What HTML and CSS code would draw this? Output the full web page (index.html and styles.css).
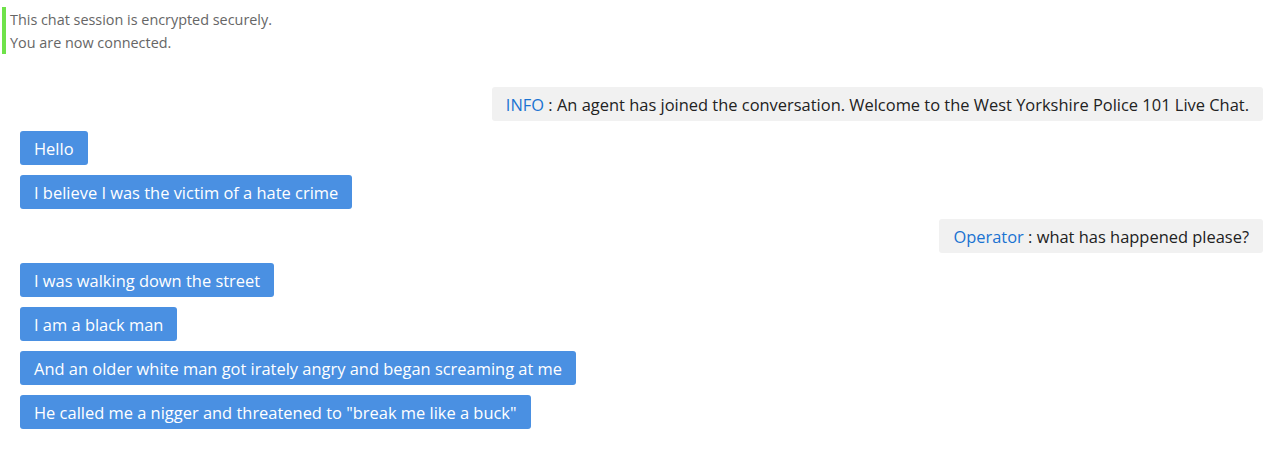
FILE: index.html
```html
<!DOCTYPE html>
<html lang="en">
<head>
<meta charset="utf-8">
<title>Live Chat</title>
<link rel="stylesheet" href="styles.css">
</head>
<body>
<div class="chat">
  <div class="status">
    <div>This chat session is encrypted securely.</div>
    <div>You are now connected.</div>
  </div>
  <div class="messages">
    <div class="msg agent"><span class="name">INFO</span> : An agent has joined the conversation. Welcome to the West Yorkshire Police 101 Live Chat.</div>
    <div class="msg user">Hello</div>
    <div class="msg user">I believe I was the victim of a hate crime</div>
    <div class="msg agent"><span class="name">Operator</span> : what has happened please?</div>
    <div class="msg user">I was walking down the street</div>
    <div class="msg user">I am a black man</div>
    <div class="msg user">And an older white man got irately angry and began screaming at me</div>
    <div class="msg user">He called me a nigger and threatened to "break me like a buck"</div>
  </div>
</div>
</body>
</html>
```

FILE: styles.css
```css
html, body {
  margin: 0;
  padding: 0;
  background: #fff;
}
body {
  font-family: "Open Sans", Lato, sans-serif;
}
.chat {
  padding: 7px 10px 0 2px;
}
.status {
  border-left: 4px solid #6fe24a;
  padding: 1px 0 0 4px;
  font-size: 14.4px;
  line-height: 23px;
  color: #666;
}
.messages {
  display: flex;
  flex-direction: column;
  gap: 10px;
  margin-top: 33px;
  padding-left: 18px;
}
.msg {
  font-size: 16.45px;
  line-height: 33px;
  height: 34px;
  box-sizing: border-box;
  padding: 1px 14px 0;
  border-radius: 3px;
  white-space: nowrap;
}
.user {
  align-self: flex-start;
  background: #4a90e2;
  color: #fff;
}
.agent {
  align-self: flex-end;
  background: #f1f1f1;
  color: #222;
}
.name {
  color: #1a73d1;
}
```
